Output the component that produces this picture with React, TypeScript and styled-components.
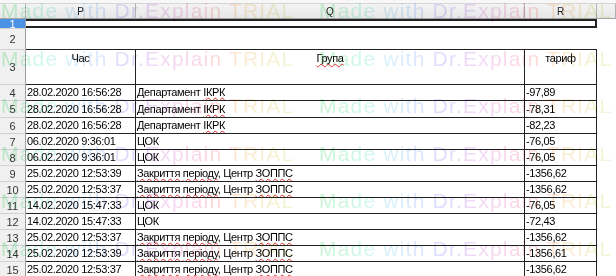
import React from 'react';
import styled, { createGlobalStyle } from 'styled-components';

// column widths: row header, P, Q, R, and the start of S
const COLS = '26px 110px 389px 72px 19px';
const LINE = '#222222';

const FLAGGED = new Set(['Група', 'ІКРК', 'Закриття', 'періоду', 'ЗОППС']);

type DataRow = {
  n: number;
  h: number;
  time: string;
  group: string;
  rate: string;
};

const rows: DataRow[] = [
  { n: 4, h: 16, time: '28.02.2020 16:56:28', group: 'Департамент ІКРК', rate: '-97,89' },
  { n: 5, h: 17, time: '28.02.2020 16:56:28', group: 'Департамент ІКРК', rate: '-78,31' },
  { n: 6, h: 16, time: '28.02.2020 16:56:28', group: 'Департамент ІКРК', rate: '-82,23' },
  { n: 7, h: 16, time: '06.02.2020 9:36:01', group: 'ЦОК', rate: '-76,05' },
  { n: 8, h: 16, time: '06.02.2020 9:36:01', group: 'ЦОК', rate: '-76,05' },
  { n: 9, h: 16, time: '25.02.2020 12:53:39', group: 'Закриття періоду, Центр ЗОППС', rate: '-1356,62' },
  { n: 10, h: 16, time: '25.02.2020 12:53:37', group: 'Закриття періоду, Центр ЗОППС', rate: '-1356,62' },
  { n: 11, h: 16, time: '14.02.2020 15:47:33', group: 'ЦОК', rate: '-76,05' },
  { n: 12, h: 16, time: '14.02.2020 15:47:33', group: 'ЦОК', rate: '-72,43' },
  { n: 13, h: 16, time: '25.02.2020 12:53:37', group: 'Закриття періоду, Центр ЗОППС', rate: '-1356,62' },
  { n: 14, h: 16, time: '25.02.2020 12:53:39', group: 'Закриття періоду, Центр ЗОППС', rate: '-1356,61' },
  { n: 15, h: 16, time: '25.02.2020 12:53:37', group: 'Закриття періоду, Центр ЗОППС', rate: '-1356,62' },
];

function Spelled({ text }: { text: string }) {
  const parts = text.split(/(\s+|,)/);
  return (
    <Text>
      {parts.map((p, i) =>
        FLAGGED.has(p) ? <Misspelled key={i}>{p}</Misspelled> : <React.Fragment key={i}>{p}</React.Fragment>
      )}
    </Text>
  );
}

function App() {
  return (
    <>
      <GlobalStyle />
      <Sheet>
        <HeaderRow>
          <ColHead />
          <ColHead>P</ColHead>
          <ColHead>Q</ColHead>
          <ColHead>R</ColHead>
          <ColHead />
        </HeaderRow>

        <Row $h={9}>
          <RowHead $active>1</RowHead>
          <BoxCell />
          <BoxCell />
          <BoxCell $last />
          <Blank />
        </Row>

        <Row $h={21}>
          <RowHead>2</RowHead>
          <Blank />
          <Blank />
          <Blank />
          <Blank />
        </Row>

        <Row $h={35}>
          <RowHead>3</RowHead>
          <TitleCell>
            <Text>Час</Text>
          </TitleCell>
          <TitleCell>
            <Spelled text="Група" />
          </TitleCell>
          <TitleCell>
            <Text>тариф</Text>
          </TitleCell>
          <Blank />
        </Row>

        {rows.map((r) => (
          <Row key={r.n} $h={r.h}>
            <RowHead>{r.n}</RowHead>
            <Cell>
              <Text>{r.time}</Text>
            </Cell>
            <Cell>
              <Spelled text={r.group} />
            </Cell>
            <Cell>
              <Text>{r.rate}</Text>
            </Cell>
            <Blank />
          </Row>
        ))}

        <Watermark>
          {Array.from({ length: 12 }).map((_, i) => (
            <Mark key={i}>Made with Dr.Explain TRIAL</Mark>
          ))}
        </Watermark>
      </Sheet>
    </>
  );
}

const GlobalStyle = createGlobalStyle`
  html, body {
    margin: 0;
    padding: 0;
    background: #ffffff;
  }
  body {
    font-family: 'Liberation Sans', Arial, sans-serif;
    overflow: hidden;
  }
`;

const Sheet = styled.div`
  position: relative;
  width: 616px;
  height: 276px;
  overflow: hidden;
  background: #ffffff;
`;

const Row = styled.div<{ $h: number }>`
  display: grid;
  grid-template-columns: ${COLS};
  height: ${(p) => p.$h}px;
`;

const HeaderRow = styled.div`
  display: grid;
  grid-template-columns: ${COLS};
  height: 19px;
  box-sizing: border-box;
  border-top: 3px solid #f7f7f7;
  border-bottom: 1px solid #a6a6a6;
`;

const ColHead = styled.div`
  display: flex;
  align-items: center;
  justify-content: center;
  box-sizing: border-box;
  border-top: 1px solid #d6d6d6;
  border-right: 1px solid #b2b2b2;
  background: linear-gradient(#f3f3f3, #e7e7e7);
  font-size: 10px;
  color: #222222;
`;

const RowHead = styled.div<{ $active?: boolean }>`
  display: flex;
  align-items: center;
  justify-content: center;
  overflow: hidden;
  box-sizing: border-box;
  border-right: 1px solid #9c9c9c;
  border-top: 1px solid ${(p) => (p.$active ? '#4a92e4' : '#d2d2d2')};
  background: ${(p) => (p.$active ? '#4a92e4' : '#f0f0f0')};
  color: ${(p) => (p.$active ? '#ffffff' : '#333333')};
  font-size: 11px;
  line-height: 12px;
`;

const Blank = styled.div`
  background: #ffffff;
`;

const BoxCell = styled.div<{ $last?: boolean }>`
  box-sizing: border-box;
  border-top: 2px solid ${LINE};
  border-bottom: 2px solid ${LINE};
  border-right: ${(p) => (p.$last ? `2px solid ${LINE}` : 'none')};
`;

const Cell = styled.div`
  display: flex;
  align-items: flex-end;
  box-sizing: border-box;
  padding: 0 1px 1px;
  border-top: 1px solid ${LINE};
  border-right: 1px solid ${LINE};
  overflow: hidden;
  font-size: 11px;
  line-height: 13px;
  letter-spacing: -0.35px;
  color: #000000;
`;

const TitleCell = styled(Cell)`
  align-items: flex-start;
  justify-content: center;
  padding-top: 2px;
`;

const Text = styled.span`
  white-space: pre;
`;

const Misspelled = styled.span`
  text-decoration: underline wavy #e03030;
  text-decoration-thickness: 1px;
  text-underline-offset: 1px;
  text-decoration-skip-ink: none;
`;

const Watermark = styled.div`
  position: absolute;
  top: -1px;
  left: 1px;
  display: grid;
  grid-template-columns: repeat(2, 318px);
  grid-auto-rows: 47.6px;
  pointer-events: none;
  mix-blend-mode: multiply;
`;

const Mark = styled.span`
  justify-self: start;
  align-self: start;
  font-family: 'Liberation Sans', Arial, sans-serif;
  font-size: 21px;
  letter-spacing: 1.2px;
  line-height: 24px;
  white-space: nowrap;
  background: linear-gradient(
    90deg,
    #c6f4cf 0%,
    #cff8ea 14%,
    #d8f0fd 24%,
    #dce5fd 36%,
    #e2d9fc 45%,
    #f3d8f8 54%,
    #fad7e8 66%,
    #fdd9d9 74%,
    #fee7d2 80%,
    #f8f0d2 90%,
    #ebf8d6 100%
  );
  -webkit-background-clip: text;
  background-clip: text;
  color: transparent;
`;

export default App;
